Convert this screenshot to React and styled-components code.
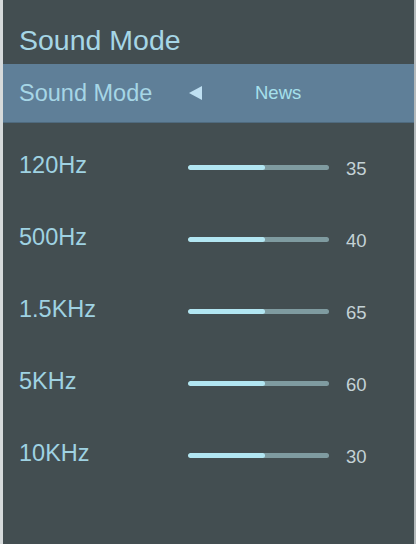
import React from 'react';
import styled, { createGlobalStyle } from 'styled-components';

const GlobalStyle = createGlobalStyle`
  html, body {
    margin: 0;
    padding: 0;
    background: #434e51;
  }
  * {
    box-sizing: border-box;
  }
`;

const Panel = styled.div`
  width: 416px;
  height: 544px;
  background: #434e51;
  border-left: 3px solid #d6dadb;
  border-right: 2px solid #b4babc;
  font-family: "Liberation Sans", Arial, sans-serif;
  overflow: hidden;
`;

const Title = styled.h1`
  margin: 0;
  padding: 16px 0 0 16px;
  height: 64px;
  line-height: 48px;
  font-size: 28.5px;
  font-weight: 400;
  color: #a6d6e6;
`;

const ModeRow = styled.div`
  display: flex;
  align-items: center;
  height: 59px;
  padding-left: 16px;
  background: #5f7f98;
  border-bottom: 1px solid #4f6a7e;
`;

const ModeLabel = styled.span`
  width: 170px;
  font-size: 23.5px;
  color: #a6d6e6;
`;

const Arrow = styled.span`
  width: 0;
  height: 0;
  border-top: 7px solid transparent;
  border-bottom: 7px solid transparent;
  border-right: 13px solid #bfe0f2;
  margin-right: 53px;
`;

const ModeValue = styled.span`
  font-size: 18.5px;
  color: #a6e0ec;
`;

const List = styled.div`
  display: flex;
  flex-direction: column;
  padding-top: 8px;
`;

const BandRow = styled.div`
  display: flex;
  align-items: center;
  height: 72px;
  padding-left: 16px;
`;

const BandLabel = styled.span`
  width: 169px;
  font-size: 23.5px;
  color: #9fd2e2;
  margin-top: -3px;
`;

const Track = styled.div`
  width: 141px;
  height: 5px;
  border-radius: 3px;
  background: #7f9ba0;
  overflow: hidden;
`;

const Fill = styled.div`
  width: ${p => p.$fill}px;
  height: 100%;
  border-radius: 3px;
  background: #b2e6f2;
`;

const BandValue = styled.span`
  margin-left: 17px;
  font-size: 18.5px;
  color: #c4d2d6;
  margin-top: 3px;
`;

const bands = [
  { label: '120Hz', value: 35 },
  { label: '500Hz', value: 40 },
  { label: '1.5KHz', value: 65 },
  { label: '5KHz', value: 60 },
  { label: '10KHz', value: 30 },
];

const App = () => {
  return (
    <>
      <GlobalStyle />
      <Panel>
        <Title>Sound Mode</Title>
        <ModeRow>
          <ModeLabel>Sound Mode</ModeLabel>
          <Arrow />
          <ModeValue>News</ModeValue>
        </ModeRow>
        <List>
          {bands.map(b => (
            <BandRow key={b.label}>
              <BandLabel>{b.label}</BandLabel>
              <Track>
                <Fill $fill={77} />
              </Track>
              <BandValue>{b.value}</BandValue>
            </BandRow>
          ))}
        </List>
      </Panel>
    </>
  );
};

export default App;
